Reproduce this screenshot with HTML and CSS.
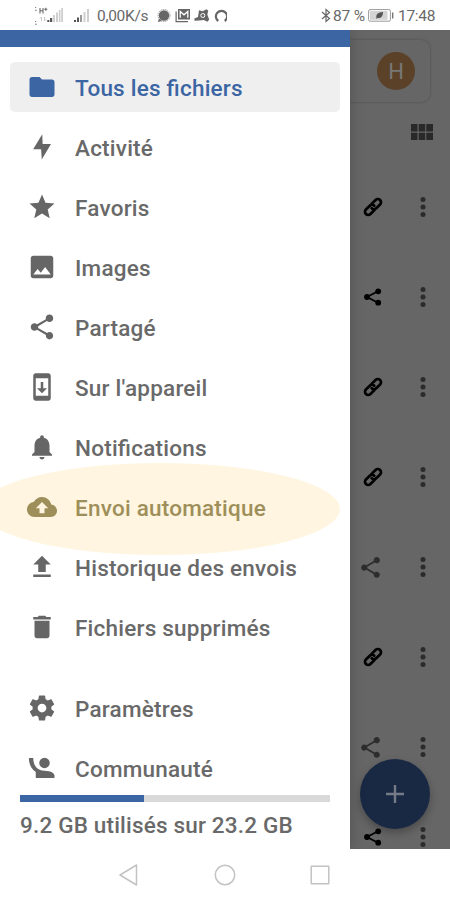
FILE: index.html
```html
<!DOCTYPE html>
<html lang="fr">
<head>
<meta charset="utf-8">
<title>Fichiers</title>
<link rel="stylesheet" href="styles.css">
</head>
<body>
<svg class="defs" width="0" height="0">
  <symbol id="share" viewBox="0 0 24 24"><path d="M18 16.08c-.76 0-1.44.3-1.96.77L8.91 12.7c.05-.23.09-.46.09-.7s-.04-.47-.09-.7l7.05-4.11c.54.5 1.25.81 2.04.81 1.66 0 3-1.34 3-3s-1.34-3-3-3-3 1.34-3 3c0 .24.04.47.09.7L8.04 9.81C7.5 9.31 6.79 9 6 9c-1.66 0-3 1.34-3 3s1.34 3 3 3c.79 0 1.5-.31 2.04-.81l7.12 4.16c-.05.21-.08.43-.08.65 0 1.61 1.31 2.92 2.92 2.92s2.92-1.31 2.92-2.92-1.31-2.92-2.92-2.92z"/></symbol>
  <symbol id="shared" viewBox="0 0 18 18"><path d="M14 3.3L3 9l11 5.7" fill="none" stroke="currentColor" stroke-width="1.8"/><circle cx="3" cy="9" r="2.9"/><circle cx="14.2" cy="3.3" r="2.9"/><circle cx="14.2" cy="14.7" r="2.9"/></symbol>
  <symbol id="link" viewBox="0 0 20 20"><g fill="none" stroke="currentColor" stroke-width="2.7" stroke-linecap="round" transform="rotate(-45 10 10)"><path d="M8.800 13.200H3.200a3.200 3.200 0 0 1 0-6.400h5.400a3.200 3.200 0 0 1 3.200 3.200"/><path d="M11.200 6.800h5.600a3.200 3.200 0 0 1 0 6.400h-5.400A3.200 3.200 0 0 1 8.200 10"/></g></symbol>
  <symbol id="more" viewBox="0 0 6 20"><circle cx="3" cy="2.500" r="2.500"/><circle cx="3" cy="10" r="2.500"/><circle cx="3" cy="17.500" r="2.500"/></symbol>
</svg>
<div class="phone">
  <header class="status">
    <svg class="sim" width="29" height="21" viewBox="0 0 29 21"><path d="M1 1h1.200v1H1zM1.500 3.500h1v1.500H1zM1 15h1.200v1H1zM1.500 17.500h1V19H1z" fill="#888"/><path d="M6 2v5.500M9 2v5.500M6 4.700h3M10.300 3.300h3M11.800 1.800v3" stroke="#666" stroke-width="1.100"/><path d="M7.500 15v-4L6 12.500M10.500 11v4l1.500-1.500" stroke="#c8c8c8" fill="none"/><path d="M13.300 14h2v2h-2zM16 12h2.200v4H16z" fill="#555"/><path d="M19 9h2v7h-2zM22 6.500h2V16h-2zM24.800 4h1.700v12h-1.700zM27.200 2H29v14h-1.800z" fill="#cfcfcf"/></svg>
    <svg class="sim2" width="16" height="14" viewBox="0 0 16 14"><path d="M0 12h2v2H0zM3 9.500h2V14H3z" fill="#555"/><path d="M6 7h2v7H6z" fill="#999"/><path d="M9.500 4h2v10h-2zM13 1h2v13h-2z" fill="#cfcfcf"/></svg>
    <span class="rate">0,00K/s</span>
    <svg class="notif" width="70" height="14" viewBox="0 0 70 14"><g fill="#666"><circle cx="7" cy="6.500" r="5.200"/><circle cx="7" cy="6.500" r="6" fill="none" stroke="#888" stroke-width=".8" stroke-dasharray="1.500 .7"/><path d="M2 9.500L.8 13l4-1z"/><path d="M21 0h12v10.500H21zM18.500 2.500h1.200v9.500H31v1.200H18.500z"/><path d="M23.200 8.800V2.500l3.800 3.300 3.800-3.300v6.300" fill="none" stroke="#fff" stroke-width="1.300"/><path d="M42 1.200l3.500 1L49.500.2l1.800 1.600-1 3.700 1.900 5-1.700 2.300-3.600-1.800-4.600.5-4.700.3L37.300 9.500 41 8z"/><circle cx="45.800" cy="6.500" r="2" fill="none" stroke="#fff" stroke-width="1"/><path d="M61.300 12a5.600 5.600 0 1 1 6.400 0" fill="none" stroke="#666" stroke-width="2.200"/></g></svg>
    <svg class="bt" width="10" height="15" viewBox="0 0 10 15"><path d="M1 4l7.500 6.500L5 13.500v-12L8.500 4.500 1 11" fill="none" stroke="#666" stroke-width="1.200"/></svg>
    <span class="pct">87 %</span>
    <svg class="battery" width="26" height="13" viewBox="0 0 26 13"><rect x=".6" y=".6" width="21.800" height="11.600" rx="1.500" fill="#fff" stroke="#999" stroke-width="1"/><path d="M2 2h17.500v8.800H2z" fill="#d4d4d4"/><path d="M8.500 9C7.500 5 10.500 3.300 15 3c0 4-2 6.700-5.500 6L8.300 10.300z" fill="#555"/><path d="M24 3.500h1.400v6H24z" fill="#777"/></svg>
    <time class="clock">17:48</time>
  </header>
  <div class="main">
    <nav class="drawer">
      <div class="bar"></div>
      <ul class="menu">
        <li class="item selected"><svg viewBox="0 0 24 24"><path d="M10 4H4c-1.100 0-1.990.9-1.990 2L2 18c0 1.100.9 2 2 2h16c1.100 0 2-.9 2-2V8c0-1.100-.9-2-2-2h-8l-2-2z"/></svg><span>Tous les fichiers</span></li>
        <li class="item"><svg viewBox="0 0 24 24"><path d="M12.200 1.800L4.900 13.800h6.400l.5 8.200 7.400-12.400h-6.700z"/></svg><span>Activité</span></li>
        <li class="item"><svg viewBox="0 0 24 24"><path d="M12 17.270L18.180 21l-1.640-7.030L22 9.240l-7.190-.61L12 2 9.190 8.630 2 9.240l5.460 4.730L5.820 21z"/></svg><span>Favoris</span></li>
        <li class="item"><svg viewBox="0 0 24 24"><path d="M21 19V5c0-1.100-.9-2-2-2H5c-1.100 0-2 .9-2 2v14c0 1.100.9 2 2 2h14c1.100 0 2-.9 2-2zM8.500 13.500l2.500 3.010L14.500 12l4.500 6H5l3.500-4.500z"/></svg><span>Images</span></li>
        <li class="item"><svg><use href="#share"/></svg><span>Partagé</span></li>
        <li class="item"><svg viewBox="0 0 24 24"><path d="M17 1.010L7 1c-1.100 0-2 .9-2 2v18c0 1.100.9 2 2 2h10c1.100 0 2-.9 2-2V3c0-1.100-.9-1.990-2-1.990zM17 19H7V5h10v14zm-1-6h-3V8h-2v5H8l4 4 4-4z"/></svg><span>Sur l'appareil</span></li>
        <li class="item"><svg viewBox="0 0 24 24"><path d="M12 22c1.100 0 2-.9 2-2h-4c0 1.100.89 2 2 2zm6-6v-5c0-3.070-1.640-5.640-4.500-6.320V4c0-.83-.67-1.500-1.500-1.500s-1.500.67-1.500 1.500v.68C7.630 5.360 6 7.920 6 11v5l-2 2v1h16v-1l-2-2z"/></svg><span>Notifications</span></li>
        <li class="item marked"><svg viewBox="0 0 24 24"><path d="M19.350 10.040C18.670 6.590 15.640 4 12 4 9.110 4 6.600 5.640 5.350 8.040 2.340 8.360 0 10.910 0 14c0 3.310 2.690 6 6 6h13c2.760 0 5-2.240 5-5 0-2.640-2.050-4.780-4.650-4.960zM14 13v4h-4v-4H7l5-5 5 5h-3z"/></svg><span>Envoi automatique</span></li>
        <li class="item"><svg viewBox="0 0 24 24"><path d="M9 16h6v-6h4l-7-7-7 7h4zm-4 2h14v2H5z"/></svg><span>Historique des envois</span></li>
        <li class="item"><svg viewBox="0 0 24 24"><path d="M6 19c0 1.100.9 2 2 2h8c1.100 0 2-.9 2-2V7H6v12zM19 4h-3.500l-1-1h-5l-1 1H5v2h14V4z"/></svg><span>Fichiers supprimés</span></li>
      </ul>
      <ul class="menu secondary">
        <li class="item"><svg viewBox="0 0 24 24"><path d="M19.430 12.980c.04-.32.07-.64.07-.98s-.03-.66-.07-.98l2.110-1.650c.19-.15.24-.42.12-.64l-2-3.460c-.12-.22-.39-.3-.61-.22l-2.490 1c-.52-.4-1.080-.73-1.690-.98l-.38-2.650C14.460 2.180 14.250 2 14 2h-4c-.25 0-.46.18-.49.42l-.38 2.650c-.61.25-1.170.59-1.690.98l-2.490-1c-.23-.09-.49 0-.61.22l-2 3.460c-.13.22-.07.49.12.64l2.110 1.650c-.04.32-.07.65-.07.98s.03.66.07.98l-2.110 1.650c-.19.15-.24.42-.12.64l2 3.460c.12.22.39.3.61.22l2.490-1c.52.4 1.080.73 1.690.98l.38 2.650c.03.24.24.42.49.42h4c.25 0 .46-.18.49-.42l.38-2.650c.61-.25 1.170-.59 1.690-.98l2.490 1c.23.09.49 0 .61-.22l2-3.460c.12-.22.07-.49-.12-.64l-2.110-1.650zM12 15.500c-1.930 0-3.500-1.570-3.500-3.500s1.570-3.500 3.500-3.500 3.500 1.570 3.500 3.500-1.570 3.500-3.500 3.500z"/></svg><span>Paramètres</span></li>
        <li class="item"><svg viewBox="0 0 24 24"><circle cx="14" cy="7.900" r="4.200"/><path d="M1.500 4H5c0 5.200 2.200 9 7 9.900 5.500.2 10 1.200 10 4.200V20H7v-4.900C3.500 12.700 1.500 9.200 1.500 4z"/></svg><span>Communauté</span></li>
      </ul>
      <div class="quota"><div class="used"></div></div>
      <p class="quota-text">9.2 GB utilisés sur 23.2 GB</p>
    </nav>
    <section class="content">
      <div class="search"><span class="avatar">H</span></div>
      <svg class="grid" width="22" height="16" viewBox="0 0 22 17" preserveAspectRatio="none"><path d="M0 0h6.500v8H0zM7.700 0h6.500v8H7.700zM15.300 0H22v8h-6.700zM0 9.200h6.500V17H0zM7.700 9.200h6.500V17H7.700zM15.300 9.200H22V17h-6.700z"/></svg>
      <ul class="files">
        <li><svg class="link"><use href="#link"/></svg><svg class="more"><use href="#more"/></svg></li>
        <li><svg class="shared"><use href="#shared"/></svg><svg class="more"><use href="#more"/></svg></li>
        <li><svg class="link"><use href="#link"/></svg><svg class="more"><use href="#more"/></svg></li>
        <li><svg class="link"><use href="#link"/></svg><svg class="more"><use href="#more"/></svg></li>
        <li><svg class="share"><use href="#share"/></svg><svg class="more"><use href="#more"/></svg></li>
        <li><svg class="link"><use href="#link"/></svg><svg class="more"><use href="#more"/></svg></li>
        <li><svg class="share"><use href="#share"/></svg><svg class="more"><use href="#more"/></svg></li>
        <li><svg class="shared"><use href="#shared"/></svg><svg class="more"><use href="#more"/></svg></li>
      </ul>
      <div class="fab"><svg width="18" height="18" viewBox="0 0 18 18"><path d="M9 0v18M0 9h18" stroke="#757b86" stroke-width="2.400"/></svg></div>
    </section>
  </div>
  <footer class="navbar">
    <svg width="22" height="24" viewBox="0 0 22 24"><path d="M18.500 2v20L2 12z"/></svg>
    <svg width="22" height="22" viewBox="0 0 22 22"><circle cx="11" cy="11" r="9.700"/></svg>
    <svg width="20" height="20" viewBox="0 0 20 20"><rect x="1.200" y="1.200" width="17.600" height="17.600" rx=".5"/></svg>
  </footer>
</div>
</body>
</html>
```
FILE: styles.css
```css
* { box-sizing: border-box; }
body { margin: 0; background: #fff; font-family: Roboto, sans-serif; color: #696969; }
ul { list-style: none; margin: 0; padding: 0; }
p { margin: 0; }
svg { display: block; flex: none; }
.defs { position: absolute; }
.phone { width: 450px; height: 900px; overflow: hidden; display: flex; flex-direction: column; }

.status { height: 30px; display: flex; align-items: flex-start; font-size: 15.5px; line-height: 18px; white-space: nowrap; }
.status span, .status time { margin-top: 7px; flex: none; }
.sim { margin: 6px 0 0 33.5px; }
.sim2 { margin: 8px 0 0 11.500px; }
.rate { width: 53px; margin-left: 7px; letter-spacing: -.3px; }
.notif { margin: 9px 0 0 7px; }
.bt { margin: 8px 0 0 94px; }
.pct { width: 32px; margin-left: 2px; letter-spacing: -.2px; }
.battery { margin: 9px 0 0 3px; }
.clock { margin-left: 4px; letter-spacing: -.3px; }

.main { height: 819px; display: flex; }
.drawer { width: 350px; background: #fff; z-index: 1; box-shadow: 0 0 14px rgba(0,0,0,.2); clip-path: inset(0 -20px 0 0); }
.bar { height: 17px; background: #3b65a3; }
.menu { position: relative; z-index: 0; padding: 15px 10px 0; }
.item { height: 50px; margin-bottom: 10px; padding-left: 17.5px; display: flex; align-items: center; gap: 17.5px; position: relative; border-radius: 5px; font-size: 22.5px; font-weight: 500; line-height: 26px; letter-spacing: .22px; font-feature-settings: "liga" 1; white-space: nowrap; }
.item svg { width: 30px; height: 30px; margin-left: -.5px; margin-right: .5px; fill: #666; }
.item span { position: relative; top: 1px; }
.selected { background: #efefef; color: #3b65a3; }
.marked { color: #9e8f5a; }
.selected svg, .marked svg { fill: currentColor; }
.marked::before { content: ""; position: absolute; left: -30px; top: -19.5px; width: 360px; height: 92px; border-radius: 50%; background: #fff5e0; z-index: -1; }
.secondary { padding-top: 21px; }
.quota { height: 7px; margin: -8px 20px 0; background: #d9d9d9; position: relative; }
.used { width: 40%; height: 100%; background: #3b65a3; }
.quota-text { margin: 10px 20px 0; font-size: 22.5px; line-height: 26px; letter-spacing: .18px; font-weight: 500; }

.content { width: 100px; background: #666; position: relative; overflow: hidden; }
.search { width: 80px; height: 62px; margin-top: 10px; padding: 12px 0 0 27px; border-radius: 0 9px 9px 0; box-shadow: 0 0 3px rgba(0,0,0,.25); }
.avatar { width: 38px; height: 38px; border-radius: 50%; background: #5b4127; color: #777; font-size: 22px; line-height: 39px; text-align: center; display: block; }
.grid { margin: 22px 0 0 61px; fill: #292929; }
.files { margin-top: 22px; }
.files li { height: 90px; display: flex; align-items: center; justify-content: space-between; padding: 0 24.5px 0 10.500px; }
.files svg { fill: currentColor; color: #000; }
.files .link { width: 24px; height: 20px; }
.files .shared { width: 24px; height: 18px; }
.files .share { width: 25px; height: 25px; margin-left: -3px; color: #2d2d2d; }
.files .more { width: 6px; height: 20px; color: #2b2b2b; }
.fab { position: absolute; left: 10px; top: 729px; width: 70px; height: 70px; border-radius: 50%; background: #192944; box-shadow: 0 4px 9px rgba(0,0,0,.28); display: flex; align-items: center; justify-content: center; }

.navbar { height: 51px; display: flex; align-items: center; padding-left: 118px; }
.navbar svg { fill: none; stroke: #c3c3c3; stroke-width: 1.5; stroke-linejoin: round; }
.navbar svg + svg { margin-left: 74px; }
```
